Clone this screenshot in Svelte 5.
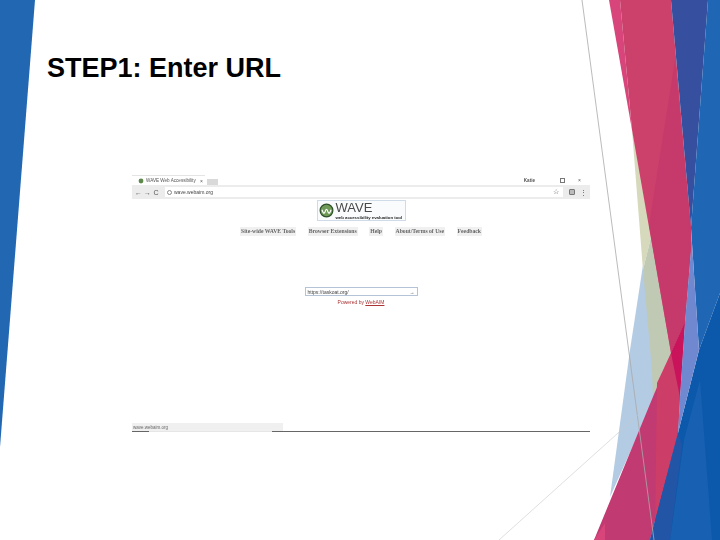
<script lang="ts">
	const tools = ['Site-wide WAVE Tools', 'Browser Extensions', 'Help', 'About/Terms of Use', 'Feedback'];
</script>

<div class="slide">
	<!-- slide backdrop: the facets down both edges -->
	<svg class="facets" viewBox="0 0 720 540" aria-hidden="true">
		<polygon points="0,0 35,0 0,447" fill="#2267b1" />
		<polygon points="643,265 654,370 655,397 610,497 630,350" fill="#b3cbe3" />
		<polygon points="632,130 652,233 643,270" fill="#d6d9bb" />
		<polygon points="652,233 657,270 671,353 653,397 652,370 643,270" fill="#c0c9b4" />
		<polygon points="609,0 620,0 632,130" fill="#d8457a" />
		<polygon points="620,0 671,0 691,228 691,250 685,322 671,353 632,130" fill="#cc416b" />
		<polygon points="671,0 708,0 691,228" fill="#36509f" />
		<polygon points="649,225 675,60 691,228 691,250 685,322 671,353" fill="#c53a6a" />
		<polygon points="671,353 685,322 680,397 678,433 650,540 594,540" fill="#c13a72" />
		<polygon points="671,353 680,397 678,433 655,525 657,383" fill="#cc3d68" />
		<polygon points="685,322 671,353 680,397" fill="#c9135a" />
		<polygon points="594,540 605,523 605,540" fill="#d8457a" />
		<polygon points="708,0 720,0 720,293 699,350 691,228" fill="#1f66b5" />
		<polygon points="720,293 699,350 678,433 650,540 720,540" fill="#0c59ab" />
		<polygon points="684,440 670,540 712,540 700,380" fill="#1760b2" />
		<polygon points="678,433 650,540 670,540 682,445" fill="#2255a6" />
		<polygon points="691,228 699,350 678,433 680,397 685,322 691,250" fill="#7088cf" />
		<line x1="582" y1="0" x2="654" y2="540" stroke="#a9a9a9" stroke-width="0.8" />
		<line x1="647" y1="407" x2="499" y2="540" stroke="#c9c9c9" stroke-width="0.6" />
	</svg>

	<h1>STEP1: Enter URL</h1>

	<div class="shot">
		<div class="tabstrip">
			<div class="tab">
				<svg class="favicon" viewBox="0 0 10 10"><circle cx="5" cy="5" r="4" fill="#5d8a4a" /></svg>
				<span class="title">WAVE Web Accessibility</span>
				<span class="close">×</span>
			</div>
			<div class="newtab"></div>
			<span class="user">Katie</span>
			<span class="winbtn square"></span>
			<span class="winbtn">×</span>
		</div>
		<div class="toolbar">
			<span class="nav">←</span>
			<span class="nav">→</span>
			<span class="nav">C</span>
			<div class="address">
				<span class="secure"></span>
				<span>wave.webaim.org</span>
				<span class="star">☆</span>
			</div>
			<span class="ext"></span>
			<span class="nav">⋮</span>
		</div>

		<div class="page">
			<div class="logo">
				<svg class="mark" viewBox="0 0 20 20">
					<circle cx="10" cy="10" r="8.5" fill="#6f9a58" stroke="#2f4f2a" stroke-width="1.6" />
					<path d="M4 9 Q6 16 8 12 Q10 5 12 12 Q14 16 16 9" fill="none" stroke="#fff" stroke-width="1.6" />
				</svg>
				<div class="wordmark">
					<span class="wave">WAVE</span>
					<span class="tagline">web accessibility evaluation tool</span>
				</div>
			</div>

			<nav class="tools">
				{#each tools as tool}
					<span class="tool">{tool}</span>
				{/each}
			</nav>

			<div class="urlbox">
				<span>https://taskoat.org/</span>
				<span class="go">→</span>
			</div>
			<p class="powered">Powered by <u>WebAIM</u></p>
		</div>

		<div class="status"><span>wave.webaim.org</span></div>
		<div class="rule">
			<span class="seg dark"></span>
			<span class="seg pale"></span>
			<span class="seg dark rest"></span>
		</div>
	</div>
</div>

<style>
	:global(body) {
		margin: 0;
		background: #fff;
	}

	.slide {
		position: relative;
		width: 720px;
		height: 540px;
		overflow: hidden;
		background: #fff;
		font-family: 'Liberation Sans', Arial, sans-serif;
	}

	.facets {
		position: absolute;
		inset: 0;
		width: 720px;
		height: 540px;
	}

	h1 {
		position: relative;
		margin: 0;
		padding: 53px 0 0 47px;
		font-size: 27px;
		line-height: 30px;
		font-weight: 700;
		color: #000;
	}

	.shot {
		position: relative;
		width: 458px;
		height: 257px;
		margin: 92px 0 0 132px;
		display: flex;
		flex-direction: column;
		filter: blur(0.45px);
	}

	.tabstrip {
		height: 10px;
		display: flex;
		align-items: center;
		font-size: 5px;
		color: #555;
	}

	.tab {
		width: 73px;
		height: 10px;
		box-sizing: border-box;
		padding: 0 2px 0 6px;
		display: flex;
		align-items: center;
		gap: 2px;
		white-space: nowrap;
		border-top: 1px solid #e4e4e4;
	}

	.favicon {
		width: 6px;
		height: 6px;
		flex-shrink: 0;
	}

	.title {
		font-size: 4.6px;
	}

	.close {
		margin-left: auto;
	}

	.newtab {
		width: 11px;
		height: 6px;
		margin: 3px 0 0 2px;
		background: #d9d9d9;
	}

	.user {
		margin-left: auto;
		margin-right: 25px;
		font-size: 4.6px;
		font-weight: 700;
	}

	.winbtn {
		width: 5px;
		margin-right: 8px;
		text-align: center;
	}

	.winbtn.square {
		box-sizing: border-box;
		width: 5px;
		height: 5px;
		margin-right: 12px;
		border: 1px solid #777;
	}

	.toolbar {
		height: 14px;
		box-sizing: border-box;
		padding: 2px 4px 2px 3px;
		display: flex;
		align-items: center;
		gap: 3px;
		background: #ececec;
		font-size: 7px;
		color: #555;
	}

	.nav {
		width: 6px;
		text-align: center;
		line-height: 1;
	}

	.address {
		flex: 1;
		height: 10px;
		margin-left: 3px;
		padding: 0 4px 0 2px;
		display: flex;
		align-items: center;
		gap: 2px;
		background: #fff;
		font-size: 5px;
		color: #444;
	}

	.secure {
		width: 3px;
		height: 3px;
		border: 1px solid #888;
		border-radius: 50%;
	}

	.star {
		margin-left: auto;
		font-size: 7px;
	}

	.ext {
		box-sizing: border-box;
		width: 6px;
		height: 6px;
		margin: 0 2px 0 3px;
		border: 1px solid #777;
		border-radius: 1px;
		background: #bbb;
	}

	.page {
		flex: 1;
		display: flex;
		flex-direction: column;
		align-items: center;
		padding-top: 1px;
	}

	.logo {
		box-sizing: border-box;
		width: 89px;
		height: 21px;
		display: flex;
		align-items: center;
		gap: 2px;
		padding-left: 1px;
		background: #f9fbfd;
		border: 1px solid #d0dbe9;
	}

	.mark {
		width: 15px;
		height: 15px;
		flex-shrink: 0;
	}

	.wordmark {
		display: flex;
		flex-direction: column;
		line-height: 1;
	}

	.wave {
		font-size: 13px;
		line-height: 14px;
		color: #4a4a4a;
	}

	.tagline {
		font-size: 4.3px;
		line-height: 5px;
		font-weight: 700;
		color: #222;
		white-space: nowrap;
	}

	.tools {
		width: 242px;
		margin-top: 6px;
		display: flex;
		justify-content: space-between;
	}

	.tool {
		padding: 1px;
		background: #f0f0f0;
		font-family: 'Liberation Serif', serif;
		font-size: 5.7px;
		font-weight: 700;
		line-height: 7px;
		color: #666;
		white-space: nowrap;
	}

	.urlbox {
		box-sizing: border-box;
		width: 113px;
		height: 9px;
		margin-top: 51px;
		padding: 0 2px;
		display: flex;
		justify-content: space-between;
		align-items: center;
		border: 1px solid #b5c3d6;
		font-size: 5px;
		color: #444;
	}

	.powered {
		margin: 3px 0 0;
		font-size: 5px;
		color: #a33;
	}

	.status {
		height: 8px;
		width: 151px;
		background: #f0f0f0;
		font-size: 4.5px;
		line-height: 9px;
		color: #666;
		padding-left: 1px;
		box-sizing: border-box;
	}

	.rule {
		height: 1px;
		display: flex;
	}

	.seg {
		width: 17px;
	}

	.seg.pale {
		width: 123px;
		background: #e6e6e6;
	}

	.seg.dark {
		background: #666;
	}

	.seg.rest {
		flex: 1;
	}
</style>
